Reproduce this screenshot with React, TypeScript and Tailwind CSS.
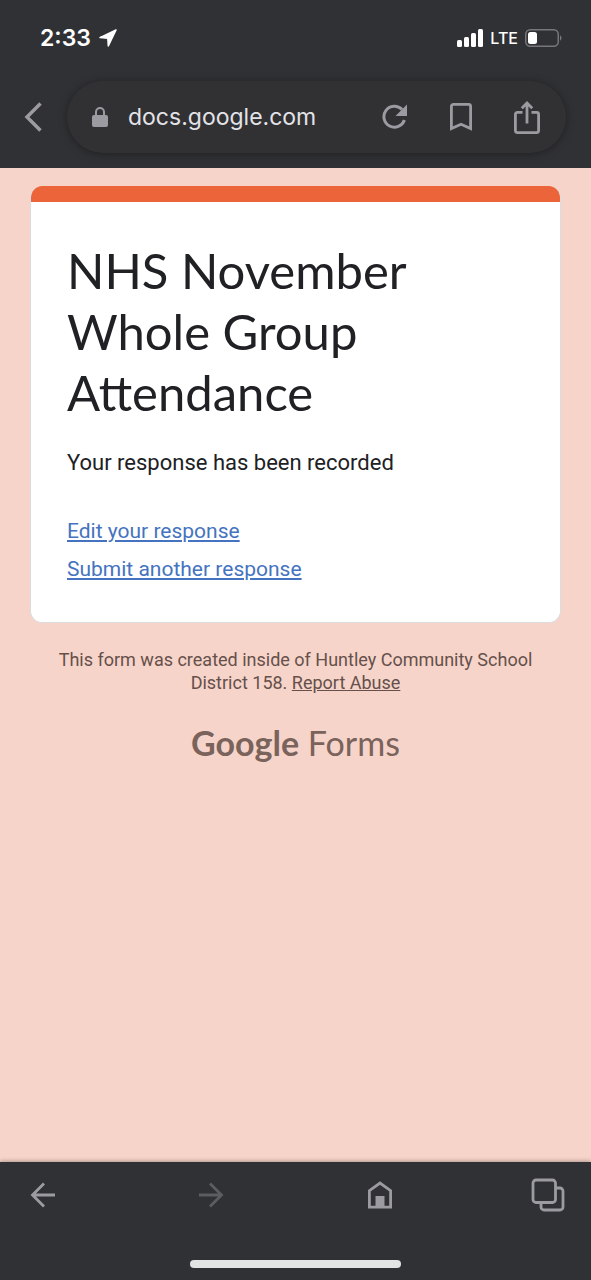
const StatusBar = () => {
  return (
    <div className="flex h-[76px] items-center justify-between pl-10 pr-7 text-white">
      <div className="flex items-center gap-2">
        <span className="font-['Inter',sans-serif] text-[23px] font-semibold">2:33</span>
        {/* Location arrow */}
        <svg width="18" height="18" viewBox="0 0 18 18" fill="currentColor" stroke="currentColor" strokeWidth="1.500" strokeLinejoin="round">
          <path d="M17 1 1 8.600 8.800 9.200 9.300 17z" />
        </svg>
      </div>
      <div className="flex items-center gap-[7px]">
        {/* Signal strength */}
        <svg width="26" height="18" viewBox="0 0 26 18" fill="currentColor">
          <rect x="0" y="11" width="5" height="7" rx="1.500" />
          <rect x="7" y="8" width="5" height="10" rx="1.500" />
          <rect x="14" y="4" width="5" height="14" rx="1.500" />
          <rect x="21" y="0" width="5" height="18" rx="1.500" />
        </svg>
        <span className="font-['Inter',sans-serif] text-base font-medium">LTE</span>
        {/* Battery */}
        <svg width="38" height="18" viewBox="0 0 38 18" fill="none">
          <rect x="0.750" y="0.750" width="32.500" height="16.500" rx="4.500" stroke="#77777b" strokeWidth="1.500" />
          <rect x="3" y="3" width="9" height="12" rx="2.500" fill="#fff" />
          <path d="M35 6.500c2 .5 2 4.500 0 5z" fill="#77777b" />
        </svg>
      </div>
    </div>
  );
};

const AddressBar = () => {
  return (
    <div className="flex items-center pb-[15px] pl-6 pr-[25px] pt-[5px] text-[#9b9ba1]">
      <button aria-label="Close" className="w-[43px] shrink-0">
        <svg width="18" height="30" viewBox="0 0 18 30" fill="none" stroke="currentColor" strokeWidth="3.500">
          <path d="M16.500 1.500 3 15l13.500 13.500" />
        </svg>
      </button>
      <div className="flex h-[72px] min-w-0 flex-1 items-center rounded-full bg-[#313134] pl-[25px] pr-[6px] shadow-[0_1px_8px_rgba(0,0,0,0.35)]">
        <svg width="16" height="20" viewBox="0 0 16 20" className="shrink-0">
          <path d="M4 9V5a4 4 0 0 1 8 0v4" fill="none" stroke="currentColor" strokeWidth="2" />
          <rect x="0" y="8" width="16" height="12" rx="2" fill="currentColor" />
        </svg>
        <span className="ml-5 min-w-0 flex-1 font-['Inter',sans-serif] text-[23px] text-[#e3e3e8]">
          docs.google.com
        </span>
        <button aria-label="Reload" className="flex w-[66px] justify-center">
          <svg width="26" height="26" viewBox="0 0 26 26" fill="none">
            <path d="M20 5.400A10.500 10.500 0 1 0 22.400 16" stroke="currentColor" strokeWidth="3" />
            <path d="M25 .5v11.500H13.500z" fill="currentColor" />
          </svg>
        </button>
        <button aria-label="Bookmark" className="flex w-[66px] justify-center">
          <svg width="22" height="28" viewBox="0 0 22 28" fill="none" stroke="currentColor" strokeWidth="2.800">
            <path d="M1.400 25.500V3.400a2 2 0 0 1 2-2h15.200a2 2 0 0 1 2 2v22.100L11 21.300z" />
          </svg>
        </button>
        <button aria-label="Share" className="flex w-[66px] justify-center">
          <svg width="26" height="34" viewBox="0 0 26 34" fill="none" stroke="currentColor" strokeWidth="2.800">
            <path d="M8.500 12.400H3.400a2 2 0 0 0-2 2v16.200a2 2 0 0 0 2 2h19.200a2 2 0 0 0 2-2V14.400a2 2 0 0 0-2-2h-5.100" />
            <path d="M13 23.500V3M7.800 8.200 13 3l5.200 5.200" />
          </svg>
        </button>
      </div>
    </div>
  );
};

const FormCard = () => {
  return (
    <section className="overflow-hidden rounded-xl border border-[#dadce0] border-t-0 bg-white">
      <div className="h-4 bg-[#eb643a]" />
      <div className="px-9 pb-[34px] pt-[38px]">
        <h1 className="max-w-[400px] font-['Lato',sans-serif] text-[49px] leading-[61px] text-[#202124]">
          NHS November Whole Group Attendance
        </h1>
        <p className="mt-6 text-[22px] leading-8 text-[#202124]">Your response has been recorded</p>
        <div className="mt-[33px] flex flex-col items-start text-[21px] leading-[38px] text-[#4573c0]">
          <a href="#edit" className="underline">
            Edit your response
          </a>
          <a href="#submit" className="underline">
            Submit another response
          </a>
        </div>
      </div>
    </section>
  );
};

const BottomBar = () => {
  return (
    <footer className="flex flex-col items-center bg-[#303134] pb-3 shadow-[0_-1px_4px_rgba(0,0,0,0.3)]">
      <nav className="flex h-[66px] w-full items-center justify-between px-[26px] text-[#9b9ba1]">
        <button aria-label="Back" className="flex w-[34px] justify-center">
          <svg width="26" height="26" viewBox="0 0 26 26" fill="none" stroke="currentColor" strokeWidth="2.800">
            <path d="M25 13H3M14 1.500 2.500 13 14 24.500" />
          </svg>
        </button>
        <button aria-label="Forward" disabled className="flex w-[34px] justify-center text-[#5c5d60]">
          <svg width="26" height="26" viewBox="0 0 26 26" fill="none" stroke="currentColor" strokeWidth="2.800">
            <path d="M1 13h22M12 1.500 23.500 13 12 24.500" />
          </svg>
        </button>
        <button aria-label="Home" className="flex w-[34px] justify-center">
          <svg width="24" height="28" viewBox="0 0 24 28" fill="none">
            <path d="M1.400 26.200V9.600L12 2l10.600 7.600v16.600z" stroke="currentColor" strokeWidth="2.800" />
            <path d="M7.500 15h9v11h-9z" fill="currentColor" />
          </svg>
        </button>
        <button aria-label="Tabs" className="flex w-[34px] justify-center">
          <svg width="34" height="34" viewBox="0 0 34 34" fill="none" stroke="currentColor" strokeWidth="2.800">
            <rect x="2" y="2" width="22.500" height="22.500" rx="3" />
            <path d="M24.500 10H29a3 3 0 0 1 3 3v16a3 3 0 0 1-3 3H13a3 3 0 0 1-3-3v-4.500" />
          </svg>
        </button>
      </nav>
      {/* Home indicator */}
      <div className="mt-8 h-2 w-[211px] rounded-full bg-[#e2e4e3]" />
    </footer>
  );
};

const App = () => {
  return (
    <div className="flex min-h-screen flex-col bg-[#f7d4c9] font-['Roboto',sans-serif]">
      <header className="bg-[#303134]">
        <StatusBar />
        <AddressBar />
      </header>
      <main className="flex-1 px-[30px] pt-[18px]">
        <FormCard />
        <p className="mt-[25px] text-center text-lg leading-[23px] text-[#65504b]">
          This form was created inside of Huntley Community School District 158.{" "}
          <a href="#report" className="underline">
            Report Abuse
          </a>
        </p>
        <div className="mt-6 text-center font-['Lato',sans-serif] text-[34px] leading-[50px] text-[#79635b]">
          <span className="font-bold">Google</span> <span>Forms</span>
        </div>
      </main>
      <BottomBar />
    </div>
  );
};

export default App;
